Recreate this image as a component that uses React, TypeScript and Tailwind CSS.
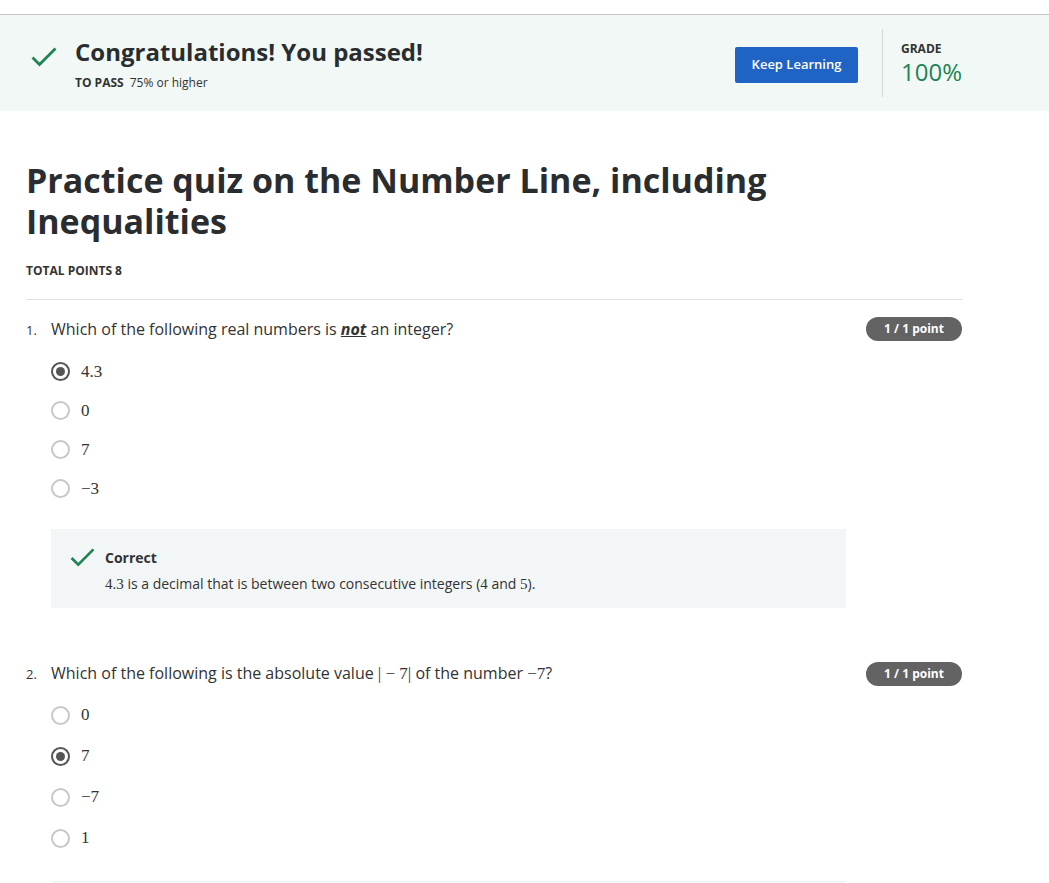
import React from "react";

const sans = { fontFamily: '"Open Sans", "Noto Sans", sans-serif' };
const math = "font-['Liberation_Serif',serif]";

function Check({ className }: { className?: string }) {
  return (
    <svg viewBox="0 0 26 20" className={className} fill="none">
      <path d="M1.5 10.5 L8.5 17.5 L24.5 1.5" stroke="currentColor" strokeWidth="2.8" />
    </svg>
  );
}

function Radio({ checked, label, tall }: { checked?: boolean; label: string; tall?: boolean }) {
  return (
    <div className={`flex items-center ${tall ? "h-[41px]" : "h-[39px]"}`}>
      {checked ? (
        <span className="w-[19px] h-[19px] rounded-full border-2 border-[#555] flex items-center justify-center">
          <span className="w-[9px] h-[9px] rounded-full bg-[#555]" />
        </span>
      ) : (
        <span className="w-[19px] h-[19px] rounded-full border-2 border-[#c8c8c8]" />
      )}
      <span className={`ml-[11px] text-[17px] text-[#333] ${math}`}>{label}</span>
    </div>
  );
}

function Badge() {
  return (
    <span className="h-[24px] w-[96px] rounded-full bg-[#636363] text-white text-[12px] font-bold flex items-center justify-center">
      1 / 1 point
    </span>
  );
}

export default function App() {
  return (
    <div style={sans} className="w-[1049px] min-h-[883px] bg-white text-[#2a2d2f] overflow-hidden">
      <div className="h-[14px]" />
      <div className="border-t border-[#c6c6c6] bg-[#f1f8f5] h-[97px] flex items-start">
        <Check className="w-[26px] h-[20px] text-[#1f8354] ml-[31px] mt-[32px]" />
        <div className="ml-[18px] mt-[21px] flex-1">
          <div className="text-[24px] font-bold leading-[32px] text-[#2a2d2f]">Congratulations! You passed!</div>
          <div className="text-[12px] mt-[6px] text-[#333]">
            <span className="font-bold">TO PASS</span>
            <span className="ml-[6px]">75% or higher</span>
          </div>
        </div>
        <button className="mt-[32px] w-[123px] h-[36px] rounded-[2px] bg-[#1f64c4] text-white text-[13px] font-semibold">
          Keep Learning
        </button>
        <div className="ml-[24px] mt-[14px] w-px h-[68px] bg-[#d6d6d6]" />
        <div className="ml-[18px] mt-[26px] w-[148px]">
          <div className="text-[12px] font-bold leading-[16px] text-[#333]">GRADE</div>
          <div className="text-[24px] leading-[30px] text-[#1f8354]">100%</div>
        </div>
      </div>

      <div className="ml-[26px] w-[936px]">
        <h1 className="mt-[49px] text-[34px] font-bold leading-[41px] text-[#2a2d2f]">
          Practice quiz on the Number Line, including Inequalities
        </h1>
        <div className="mt-[20px] text-[12px] font-bold text-[#333]">TOTAL POINTS 8</div>
        <div className="mt-[19px] h-px bg-[#e1e1e1]" />

        <div className="mt-[17px] flex items-center justify-between">
          <div className="flex items-baseline">
            <span className="w-[25px] text-[13px] text-[#333]">1.</span>
            <span className="text-[16px] text-[#333]">
              Which of the following real numbers is{" "}
              <span className="font-bold italic underline">not</span> an integer?
            </span>
          </div>
          <Badge />
        </div>
        <div className="ml-[25px] mt-[11px] flex flex-col">
          <Radio checked label="4.3" />
          <Radio label="0" />
          <Radio label="7" />
          <Radio label="−3" />
          <div className="mt-[21px] w-[795px] h-[79px] bg-[#f3f6f6] flex items-start">
            <Check className="w-[25px] h-[19px] text-[#1f8354] ml-[19px] mt-[19px]" />
            <div className="ml-[10px] mt-[19px]">
              <div className="text-[14px] font-bold leading-[20px] text-[#333]">Correct</div>
              <div className="text-[14px] leading-[20px] mt-[6px] text-[#333]">
                <span className={`${math} text-[15px]`}>4.3</span> is a decimal that is between two consecutive integers (
                <span className={`${math} text-[15px]`}>4</span> and <span className={`${math} text-[15px]`}>5</span>).
              </div>
            </div>
          </div>
        </div>

        <div className="mt-[53px] flex items-center justify-between">
          <div className="flex items-baseline">
            <span className="w-[25px] text-[13px] text-[#333]">2.</span>
            <span className="text-[16px] text-[#333]">
              Which of the following is the absolute value{" "}
              <span className={`${math} text-[17px]`}>|&nbsp;−&nbsp;7|</span> of the number{" "}
              <span className={`${math} text-[17px]`}>−7</span>?
            </span>
          </div>
          <Badge />
        </div>
        <div className="ml-[25px] mt-[8px] flex flex-col">
          <Radio tall label="0" />
          <Radio tall checked label="7" />
          <Radio tall label="−7" />
          <Radio tall label="1" />
          <div className="mt-[22px] w-[795px] h-[20px] bg-[#f3f6f6]" />
        </div>
      </div>
    </div>
  );
}
